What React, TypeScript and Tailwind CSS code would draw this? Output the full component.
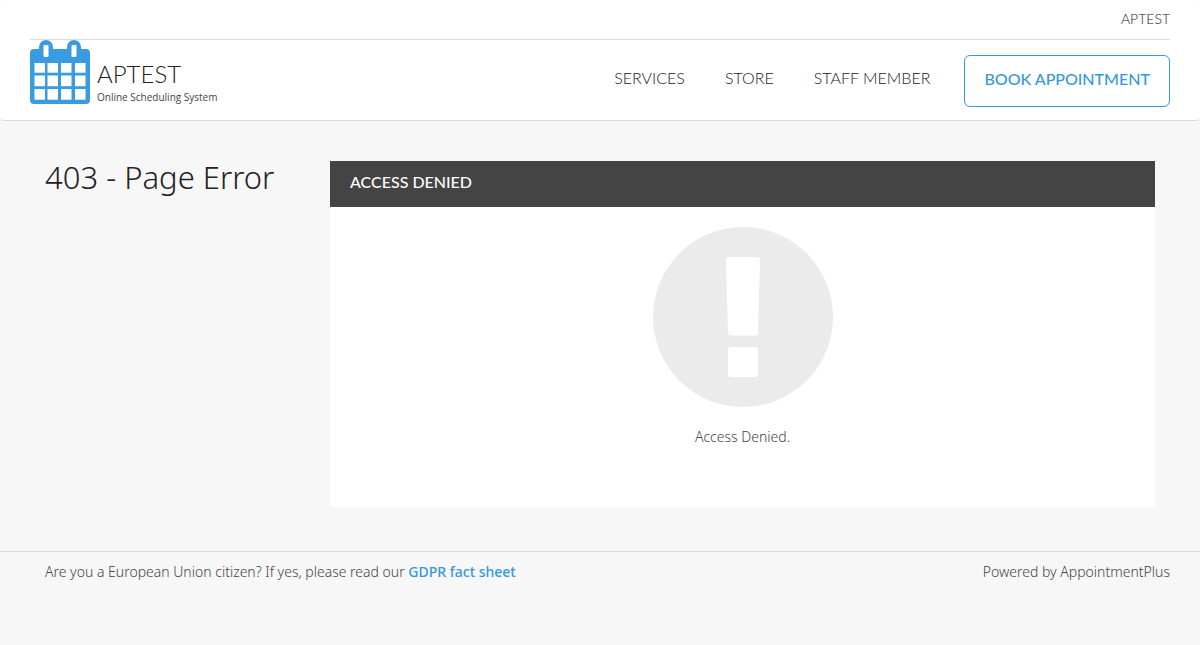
function CalendarLogo() {
  return (
    <svg className="h-16 w-[60px] shrink-0" viewBox="0 0 60 64" aria-hidden="true">
      <path
        fill="#3a9be0"
        d="M4 9h5V7a7 7 0 0 1 14 0v2h14V7a7 7 0 0 1 14 0v2h5a4 4 0 0 1 4 4v47a4 4 0 0 1-4 4H4a4 4 0 0 1-4-4V13a4 4 0 0 1 4-4Z"
      />
      <g fill="#fff">
        <rect x="13.5" y="5" width="5" height="12" rx="1" />
        <rect x="41.5" y="5" width="5" height="12" rx="1" />
        {[23, 35.5, 49].map((y, row) =>
          [4.5, 17.5, 31, 45].map((x) => (
            <rect key={`${x}-${y}`} x={x} y={y} width="10.5" height={row === 0 ? 9.7 : 10.7} />
          )),
        )}
      </g>
    </svg>
  );
}

function AlertMark() {
  return (
    <svg className="size-[180px]" viewBox="0 0 180 180" aria-hidden="true">
      <circle cx="90" cy="90" r="90" fill="#ebebeb" />
      <path
        fill="#fff"
        d="M76 30h28a3 3 0 0 1 3 3l-2 73a3 3 0 0 1-3 2.500H78a3 3 0 0 1-3-2.500l-2-73a3 3 0 0 1 3-3Z"
      />
      <rect x="75" y="120" width="30" height="30" rx="3" fill="#fff" />
    </svg>
  );
}

const links = ["SERVICES", "STORE", "STAFF MEMBER"];

export default function App() {
  return (
    <div className="min-h-screen bg-[#f7f7f7] font-['Noto_Sans',sans-serif] text-sm font-light text-[#444]">
      <header className="rounded border-b border-[#d9dbdc] bg-white px-[30px] font-['Lato',sans-serif]">
        <div className="flex h-10 items-center justify-end border-b border-[#d9dbdc] pb-px">
          <a href="#account" className="text-sm text-[#222]">APTEST</a>
        </div>
        <div className="flex h-20 items-start justify-between">
          <a href="#home" className="flex items-start gap-[7px]">
            <CalendarLogo />
            <span className="flex flex-col pt-[18px]">
              <span className="text-2xl leading-8 font-light text-[#222]">APTEST</span>
              <span className="pt-px font-['Open_Sans',sans-serif] text-[10px] leading-3 font-normal text-[#444]">
                Online Scheduling System
              </span>
            </span>
          </a>
          <div className="flex items-start pt-[15px]">
            <nav className="flex gap-10 pr-[34px]">
              {links.map((label) => (
                <a key={label} href="#nav" className="text-base leading-[46px] text-[#222]">{label}</a>
              ))}
            </nav>
            <button
              type="button"
              className="h-[52px] rounded-md border border-[#3498db] px-[19px] pb-1 text-base font-medium text-[#3498db]"
            >
              BOOK APPOINTMENT
            </button>
          </div>
        </div>
      </header>

      <main className="flex px-[45px] pt-10 pb-11">
        <h1 className="w-[285px] shrink-0 text-[31px] leading-8 font-light text-[#222]">403 - Page Error</h1>
        <section className="min-w-0 grow bg-white">
          <h2 className="bg-[#444] px-5 pt-[9px] pb-[13px] font-['Lato',sans-serif] text-base leading-6 font-medium text-white">
            ACCESS DENIED
          </h2>
          <div className="flex flex-col items-center gap-5 px-5 pt-5 pb-[60px]">
            <AlertMark />
            <p className="leading-5">Access Denied.</p>
          </div>
        </section>
      </main>

      <footer className="flex justify-between border-t border-[#d9dbdc] py-[10px] pr-[30px] pl-[45px] leading-5">
        <p>
          Are you a European Union citizen? If yes, please read our{" "}
          <a href="#gdpr" className="font-medium text-[#3498db]">GDPR fact sheet</a>
        </p>
        <p>Powered by AppointmentPlus</p>
      </footer>
    </div>
  );
}
